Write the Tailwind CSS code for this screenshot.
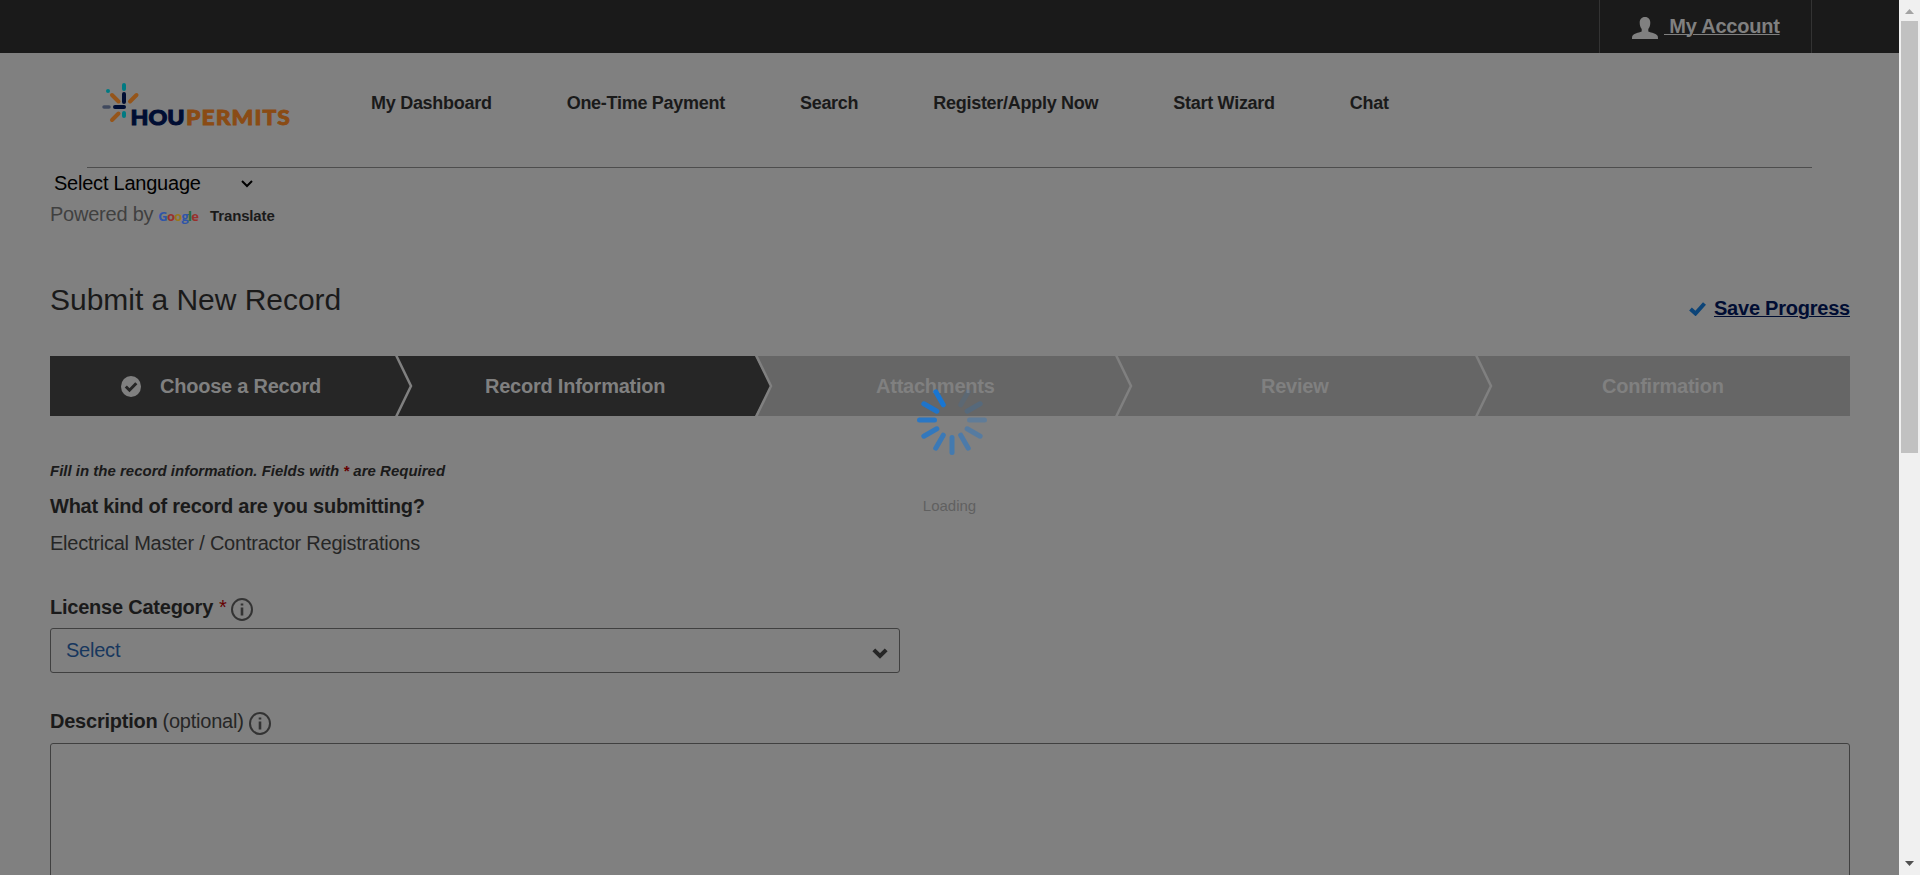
<!DOCTYPE html>
<html lang="en">
<head>
<meta charset="utf-8">
<title>HouPermits - Submit a New Record</title>
<script src="https://cdn.jsdelivr.net/npm/@tailwindcss/browser@4"></script>
</head>
<body class="h-[875px] overflow-hidden bg-[#808080] font-['Liberation_Sans',Arial,sans-serif] tracking-[-0.23px] text-[#1a1a1a]">
<div class="relative flex h-[875px] w-[1920px] overflow-hidden">
  <div class="flex w-[1899px] shrink-0 flex-col overflow-hidden">
    <header class="flex h-[53px] shrink-0 justify-end bg-[#1a1a1a] pr-[87px]">
      <div class="flex w-[213px] items-center border-x border-[#333] pl-8 text-[#808080]">
        <svg class="mt-[2px] h-[22px] w-[26px]" viewBox="0 0 26 22" fill="currentColor"><path d="M13 0c3.600 0 5.300 2.500 5.300 5.800 0 2.400-.7 4.700-2 6.200v2.500c3.500 1.400 7.700 2 9.200 4.300.4.700.5 1.600.5 3.200H0c0-1.600.1-2.500.5-3.200 1.500-2.300 5.700-2.900 9.200-4.300V12c-1.300-1.500-2-3.800-2-6.200C7.700 2.500 9.400 0 13 0z"/></svg>
        <a class="mb-[2px] ml-[6px] whitespace-pre text-xl font-bold leading-6 underline decoration-1 underline-offset-1"> My Account</a>
      </div>
    </header>
    <div class="mx-[87px] flex h-[115px] w-[1725px] shrink-0 border-b border-[#4d4d4d]">
      <svg class="ml-[14px] mt-[29px] h-[52px] w-[196px] shrink-0 overflow-visible" viewBox="0 0 196 52">
        <g fill="none" stroke-width="4" stroke-linecap="round">
          <path stroke="#007a82" d="M23 3v4M23 31v3"/>
          <path stroke="#000d33" d="M23 12v8M14 25h9"/>
          <path stroke="#95551a" d="M11 13l6.500 6.500M35.500 13L29 19.500M17.500 31.500L11 38"/>
          <path stroke="#40495e" stroke-width="3.500" d="M3 25h5"/>
        </g>
        <circle cx="7" cy="9" r="2" fill="#007a82"/>
        <text x="29.500" y="42.500" font-family="Lato, sans-serif" font-weight="900" font-size="21.500" letter-spacing="0" fill="#000d33" stroke="#000d33" stroke-width="1" textLength="54" lengthAdjust="spacingAndGlyphs">HOU</text>
        <text x="85" y="42.500" font-family="Lato, sans-serif" font-weight="900" font-size="21.500" letter-spacing="1" fill="#8a4b14" stroke="#8a4b14" stroke-width=".8" textLength="105" lengthAdjust="spacingAndGlyphs">PERMITS</text>
      </svg>
      <nav class="ml-[74px] flex gap-[75px] pt-[39px] text-[18px] font-bold leading-[22px] tracking-[-0.28px]">
        <a>My Dashboard</a><a>One-Time Payment</a><a>Search</a><a>Register/Apply Now</a><a>Start Wizard</a><a>Chat</a>
      </nav>
    </div>
    <main class="flex w-[1850px] flex-col pl-[50px]">
      <div class="flex h-[30px] items-center pl-1 text-xl text-black">
        <span>Select Language</span>
        <svg class="ml-[40px] mt-[2px] h-[8px] w-[12px]" viewBox="0 0 12 8" fill="none" stroke="currentColor" stroke-width="2"><path d="M1 1l5 5 5-5"/></svg>
      </div>
      <div class="flex h-[32px] items-center text-xl text-[#404040]">
        <span>Powered by</span>
        <span class="ml-[5px] mt-[3px] font-['Open_Sans',sans-serif] text-[13px] font-bold leading-4 tracking-[-0.8px]"><span class="text-[#2f55a8]">G</span><span class="text-[#99302c]">o</span><span class="text-[#9a781a]">o</span><span class="text-[#2f55a8]">g</span><span class="text-[#246b39]">l</span><span class="text-[#99302c]">e</span></span>
        <span class="ml-[12px] mt-[3px] text-[15px] font-bold leading-4 tracking-[-0.15px] text-[#1a1a1a]">Translate</span>
      </div>
      <div class="mt-[50px] flex h-[76px] justify-between">
        <h1 class="text-[30px] leading-[40px] tracking-[-0.03px]">Submit a New Record</h1>
        <a class="mt-4 flex h-[24px] items-center gap-2 text-xl font-bold leading-6 text-[#000d33]">
          <svg class="mt-[2px] h-[14px] w-[17px]" viewBox="0 0 17 14" fill="none" stroke="#0c4478" stroke-width="4"><path d="M1.500 7l5 4.500L15.500 1.500"/></svg>
          <span class="underline decoration-1 underline-offset-1">Save Progress</span>
        </a>
      </div>
      <ol class="relative flex h-[60px] text-xl font-bold leading-[60px] text-[#808080]">
        <li class="flex w-[360px] items-center bg-[#262626] pl-[71px]">
          <svg class="h-[21px] w-[20px]" viewBox="0 0 20 21"><ellipse cx="10" cy="10.500" rx="10" ry="10.500" fill="#808080"/><path d="M4.800 10.500l3.700 3.700 6.800-7" fill="none" stroke="#262626" stroke-width="3"/></svg>
          <span class="ml-[19px]">Choose a Record</span>
        </li>
        <li class="w-[345px] bg-[#262626] pl-[75px]">Record Information</li>
        <li class="w-[375px] bg-[#666] pl-[121px]">Attachments</li>
        <li class="w-[360px] bg-[#666] pl-[131px]">Review</li>
        <li class="w-[360px] bg-[#666] pl-[112px]">Confirmation</li>
        <li class="absolute inset-0" aria-hidden="true">
          <svg class="h-[60px] w-[1800px]" viewBox="0 0 1800 60">
            <path d="M705 0l16 30-16 30z" fill="#262626"/>
            <path d="M346 -1l15 31-15 31M706 -1l15 31-15 31M1066 -1l15 31-15 31M1426 -1l15 31-15 31" fill="none" stroke="#808080" stroke-width="2.500"/>
          </svg>
        </li>
      </ol>
      <p class="mt-[45px] text-[15px] font-bold italic leading-5 tracking-normal">Fill in the record information. Fields with <span class="text-[#600]">*</span> are Required</p>
      <h2 class="mt-[13px] text-xl font-bold leading-6 tracking-[-0.25px]">What kind of record are you submitting?</h2>
      <p class="mt-[13px] text-xl leading-6 text-[#262626]">Electrical Master / Contractor Registrations</p>
      <div class="mt-[37px] flex h-[30px] text-xl font-bold leading-[30px]">
        <span>License Category</span><span class="ml-[6px] font-normal text-[#600]">*</span>
        <svg class="ml-[4px] mt-[6px] h-[23px] w-[22px]" viewBox="0 0 22 23" fill="none" stroke="#333" stroke-width="2"><ellipse cx="11" cy="11.500" rx="10" ry="10.500"/><path stroke-width="2.600" d="M11 5.500v2M11 9.500v8"/></svg>
      </div>
      <div class="mt-[6px] flex h-[45px] w-[850px] items-center justify-between rounded-[3px] border border-[#404040] pl-[15px] pr-[11px] text-xl text-[#17375e]">
        <span class="-mt-[1px]">Select</span>
        <svg class="mt-[5px] h-[11px] w-[16px]" viewBox="0 0 16 11" fill="none" stroke="#262626" stroke-width="4"><path d="M1.800 1.800L8 8l6.200-6.200"/></svg>
      </div>
      <div class="mt-[33px] flex h-[30px] text-xl leading-[30px]">
        <span class="font-bold">Description</span><span class="ml-[5px] text-[#262626]">(optional)</span>
        <svg class="ml-[5px] mt-[6px] h-[23px] w-[22px]" viewBox="0 0 22 23" fill="none" stroke="#333" stroke-width="2"><ellipse cx="11" cy="11.500" rx="10" ry="10.500"/><path stroke-width="2.600" d="M11 5.500v2M11 9.500v8"/></svg>
      </div>
      <div class="mt-[7px] h-[200px] rounded-[3px] border border-[#404040]"></div>
    </main>
  </div>
  <div class="flex w-[21px] flex-col items-center bg-[#f0f0f0]">
    <svg class="mt-[9px] h-[5px] w-[9px] shrink-0" viewBox="0 0 9 5" fill="#a3a3a3"><path d="M4.500 0L9 5H0z"/></svg>
    <div class="mt-[7px] h-[432px] w-[17px] shrink-0 bg-[#c1c1c1]"></div>
    <svg class="mb-[9px] mt-auto h-[5px] w-[9px]" viewBox="0 0 9 5" fill="#505050"><path d="M4.500 5L9 0H0z"/></svg>
  </div>
  <!-- Loading indicator -->
  <div class="absolute left-[902px] top-[370px] flex w-[100px] flex-col items-center">
    <svg class="h-[100px] w-[100px]" viewBox="-50 -50 100 100" stroke="#1976d2" stroke-width="5" stroke-linecap="round">
      <path d="M0-17.500V-32.500" transform="rotate(30)" opacity=".12"/>
      <path d="M0-17.500V-32.500" transform="rotate(60)" opacity=".2"/>
      <path d="M0-17.500V-32.500" transform="rotate(90)" opacity=".3"/>
      <path d="M0-17.500V-32.500" transform="rotate(120)" opacity=".4"/>
      <path d="M0-17.500V-32.500" transform="rotate(150)" opacity=".5"/>
      <path d="M0-17.500V-32.500" transform="rotate(180)" opacity=".58"/>
      <path d="M0-17.500V-32.500" transform="rotate(210)" opacity=".67"/>
      <path d="M0-17.500V-32.500" transform="rotate(240)" opacity=".75"/>
      <path d="M0-17.500V-32.500" transform="rotate(270)" opacity=".83"/>
      <path d="M0-17.500V-32.500" transform="rotate(300)" opacity=".92"/>
      <path d="M0-17.500V-32.500" transform="rotate(330)"/>
    </svg>
    <span class="mr-[5px] mt-[26px] text-[15px] leading-5 tracking-normal text-[#606060]">Loading</span>
  </div>
</div>
</body>
</html>
